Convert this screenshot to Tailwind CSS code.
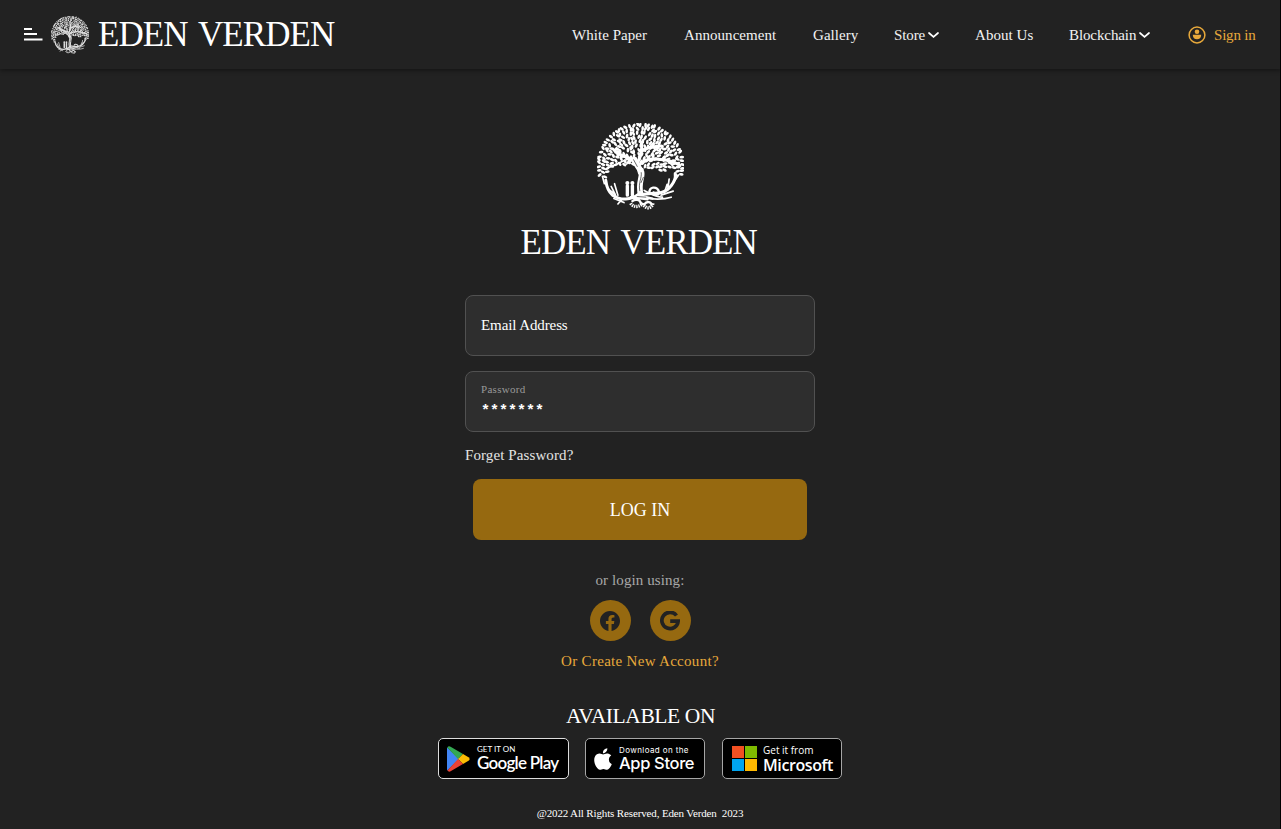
<!DOCTYPE html>
<html lang="en">
<head>
<meta charset="utf-8">
<title>Eden Verden - Sign in</title>
<script src="https://cdn.jsdelivr.net/npm/@tailwindcss/browser@4"></script>
</head>
<body class="bg-[#222222] text-white font-['Liberation_Serif',serif]">
<svg class="hidden">
  <symbol id="tree" viewBox="50 26 258 258">
    <g id="leaves" fill="#fff"></g>
    <g fill="none" stroke="#fff" stroke-linecap="round" stroke-linejoin="round">
      <path stroke-width="9" d="M176 175C172 150 160 138 145 130C130 126 115 120 100 106M172 140C180 125 184 108 182 84M182 110C195 98 215 96 240 94M176 150C190 134 215 130 240 134C262 136 280 140 296 152"/>
      <path stroke-width="5" d="M145 132C125 138 108 150 80 160M118 120L108 98M184 84L192 70M215 98L232 108M205 98L218 84M240 134L262 122M262 138L278 158M150 130L138 148"/>
      <path stroke-width="17" d="M160 134C164 150 178 160 182 172C186 186 170 205 180 240"/>
      <path stroke-width="9" d="M176 236C150 256 120 256 96 240C82 228 78 212 76 196M184 238C210 230 248 244 270 212C280 200 284 190 282 176"/>
      <path stroke-width="5" d="M84 222C94 232 104 234 106 244M92 214L104 238M102 206L112 240M124 252L112 266M160 250C190 240 220 262 270 246M190 226C210 236 220 246 244 246M260 222L264 192M270 212L292 180M250 232L258 208M72 206L66 184M240 240L276 228M100 250L130 262"/>
      <path stroke-width="7" d="M206 234C202 214 228 212 234 230C236 240 222 242 218 232"/>
      <path stroke-width="10" stroke-dasharray="4 2.5" stroke-linecap="butt" d="M150 264C156 276 178 278 186 262M186 264C192 282 212 282 216 264"/>
      <path stroke-width="7" d="M155 258C164 250 178 254 180 264M190 268C198 256 210 260 212 268M150 246L200 252M170 240L215 250"/>
      <path stroke-width="10" d="M140 212V240M155 212V240"/>
    </g>
    <g fill="#fff"><circle cx="140" cy="204" r="6"/><circle cx="155" cy="204" r="6"/></g>
    <path fill="none" stroke="#222" stroke-width="2" d="M181 172C184 188 172 202 177 228M158 134L170 156M188 186L180 204M168 244L196 246"/>
  </symbol>
</svg>

<div class="relative flex h-[829px] w-[1281px] flex-col overflow-hidden">
  <header class="flex h-[69px] shrink-0 items-center pl-6 pr-[25px] shadow-[0_2px_4px_rgba(0,0,0,0.35)]">
    <svg class="h-[13px] w-[19px]" viewBox="0 0 19 13" fill="#fff"><path d="M0 0h8v2H0zM0 5h13v2H0zM0 10.500h18.500v2H0z"/></svg>
    <svg class="ml-2 h-[38px] w-[38px] opacity-85"><use href="#tree"/></svg>
    <div class="ml-[9px] w-[238px] whitespace-nowrap text-[35px] leading-[40px] tracking-[-0.9px] [word-spacing:3px]">EDEN VERDEN</div>
    <nav class="ml-auto flex items-center whitespace-nowrap text-[15px] leading-5 tracking-[0.05px] text-[#f2f2f2]">
      <a class="mr-9 w-[76px]">White Paper</a>
      <a class="mr-9 w-[93px]">Announcement</a>
      <a class="mr-9 w-[45px]">Gallery</a>
      <a class="mr-9 flex w-[45px] items-center justify-between tracking-[-0.1px]">Store<svg class="h-[6px] w-[11px] shrink-0" viewBox="0 0 11 6" fill="none" stroke="#fff" stroke-width="1.7" stroke-linecap="round"><path d="M1 1l4.500 3.800L10 1"/></svg></a>
      <a class="mr-9 w-[58px]">About Us</a>
      <a class="mr-[38px] flex w-[81px] items-center justify-between tracking-[-0.1px]">Blockchain<svg class="h-[6px] w-[11px] shrink-0" viewBox="0 0 11 6" fill="none" stroke="#fff" stroke-width="1.7" stroke-linecap="round"><path d="M1 1l4.500 3.800L10 1"/></svg></a>
      <a class="flex items-center gap-2 text-[#e8a93b]">
        <svg class="h-[18px] w-[18px]" viewBox="0 0 18 18"><circle cx="9" cy="9" r="7.900" fill="none" stroke="#e8a93b" stroke-width="1.500"/><circle cx="9" cy="5.800" r="2.300" fill="#e8a93b"/><path fill="#e8a93b" d="M4.800 8.700h8.400c0 3-1.700 4.600-4.200 4.600S4.800 11.700 4.800 8.700z"/></svg>
        <span class="w-[42px] tracking-[-0.2px]">Sign in</span>
      </a>
    </nav>
  </header>

  <main class="flex w-[1280px] flex-col items-center">
    <svg class="mt-[54px] h-[87px] w-[87px]"><use href="#tree"/></svg>
    <h1 class="mt-[13px] w-[239px] whitespace-nowrap text-[35px] leading-[40px] tracking-[-0.9px] [word-spacing:3px]">EDEN VERDEN</h1>

    <div class="mt-[32px] flex h-[61px] w-[350px] items-center rounded-lg border border-[#515151] bg-[#2e2e2e] px-[15px] text-[15px] tracking-[-0.1px]">Email Address</div>
    <div class="mt-[15px] flex h-[61px] w-[350px] flex-col rounded-lg border border-[#515151] bg-[#2e2e2e] px-[15px] pt-[10px]">
      <span class="text-[11px] leading-[14px] tracking-[0.3px] text-[#999]">Password</span>
      <span class="mt-[6px] flex h-[14px] font-['Liberation_Mono',monospace] text-[15px] font-bold leading-[20px]">*******</span>
    </div>
    <a class="mt-[13px] w-[350px] text-[15px] leading-5 tracking-[0.1px] text-[#e4e4e4]">Forget Password?</a>
    <button class="mt-[14px] h-[61px] w-[334px] rounded-lg bg-[#966910] pt-px text-[18px]">LOG IN</button>
    <p class="mt-[30px] text-[15px] leading-5 tracking-[0.1px] text-[#a8a8a8]">or login using:</p>
    <div class="mt-[10px] flex gap-[19px]">
      <a class="flex h-[41px] w-[41px] items-center justify-center rounded-full bg-[#966910]"><svg class="h-5 w-5" viewBox="0 0 24 24" fill="#222"><path d="M24 12.073c0-6.627-5.373-12-12-12s-12 5.373-12 12c0 5.990 4.388 10.954 10.125 11.854v-8.385H7.078v-3.470h3.047V9.430c0-3.007 1.792-4.669 4.533-4.669 1.312 0 2.686.235 2.686.235v2.953H15.830c-1.491 0-1.956.925-1.956 1.874v2.250h3.328l-.532 3.470h-2.796v8.385C19.612 23.027 24 18.062 24 12.073z"/></svg></a>
      <a class="flex h-[41px] w-[41px] items-center justify-center rounded-full bg-[#966910]"><svg class="h-5 w-5" viewBox="0 0 20 20" fill="none" stroke="#222" stroke-width="3.700"><path d="M16.500 4.500A8.150 8.150 0 1 0 18.150 10.100H10.200"/></svg></a>
    </div>
    <a class="mt-[10px] text-[15px] leading-5 tracking-[0.3px] text-[#e8a93b]">Or Create New Account?</a>

    <h2 class="mt-[33px] whitespace-nowrap pl-px text-[21.500px] leading-6 tracking-[-0.400px]">AVAILABLE ON</h2>
    <div class="mt-[10px] flex whitespace-nowrap">
      <a class="flex h-[41px] w-[131px] items-center rounded-[5px] border border-[#ddd] bg-black pl-[8px] font-['Lato',sans-serif]">
        <svg class="h-[26px] w-[23px] shrink-0" viewBox="0 0 23 26"><path fill="#4285f4" d="M.3 1.500Q0 2 0 3v20q0 1 .4 1.600L12 13z"/><path fill="#34a853" d="M.3 1.500Q1.500-.4 3.600.7L16 8l-5 5z"/><path fill="#fbbc04" d="M16 8l5.500 3.200q2.300 1.800 0 3.600L16 18l-5-5z"/><path fill="#ea4335" d="M.4 24.600Q1.700 26.300 3.600 25.300L16 18l-5-5z"/></svg>
        <span class="ml-[7px] flex flex-col"><span class="text-[8px] leading-[9px]">GET IT ON</span><span class="text-[17px] font-semibold leading-[18px] tracking-[-0.750px]">Google Play</span></span>
      </a>
      <a class="ml-4 flex h-[41px] w-[120px] items-center rounded-[5px] border border-[#a6a6a6] bg-black pl-[8px] font-['Inter',sans-serif]">
        <svg class="h-[22px] w-[18px] shrink-0" viewBox="2 0 20 24" fill="#fff"><path d="M12.152 6.896c-.948 0-2.415-1.078-3.960-1.040-2.040.027-3.910 1.183-4.961 3.014-2.117 3.675-.546 9.103 1.519 12.090 1.013 1.454 2.208 3.090 3.792 3.039 1.520-.065 2.090-.987 3.935-.987 1.831 0 2.350.987 3.960.948 1.637-.026 2.676-1.480 3.676-2.948 1.156-1.688 1.636-3.325 1.662-3.415-.039-.013-3.182-1.221-3.220-4.857-.026-3.040 2.480-4.494 2.597-4.559-1.429-2.090-3.623-2.324-4.390-2.376-2-.156-3.675 1.090-4.610 1.090zM15.530 3.830c.843-1.012 1.400-2.427 1.245-3.830-1.207.052-2.662.805-3.532 1.818-.780.896-1.454 2.338-1.273 3.714 1.338.104 2.715-.688 3.559-1.701"/></svg>
        <span class="ml-[7px] flex flex-col"><span class="text-[8px] leading-[9px] tracking-[0.400px]">Download on the</span><span class="text-[16.500px] font-medium leading-[17px] tracking-[-0.350px]">App Store</span></span>
      </a>
      <a class="ml-[17px] flex h-[41px] w-[120px] items-center rounded-[5px] border border-[#a6a6a6] bg-black pl-[9px] font-['Open_Sans',sans-serif]">
        <svg class="h-[25px] w-[25px] shrink-0" viewBox="0 0 25 25"><path fill="#f25022" d="M0 0h12v12H0z"/><path fill="#7fba00" d="M13 0h12v12H13z"/><path fill="#00a4ef" d="M0 13h12v12H0z"/><path fill="#ffb900" d="M13 13h12v12H13z"/></svg>
        <span class="ml-[6px] flex flex-col"><span class="text-[10px] leading-[12px]">Get it from</span><span class="text-[16px] font-semibold leading-[18px] tracking-[-0.400px]">Microsoft</span></span>
      </a>
    </div>
    <p class="mt-[27px] whitespace-pre text-[11px] leading-[14px] tracking-[-0.140px]">@2022 All Rights Reserved, Eden Verden  2023</p>
  </main>
  <div class="absolute right-0 top-0 h-full w-px bg-black"></div>
</div>
<script>
  // Scatter leaves over the crown, leaving the hollows either side of the trunk open.
  let seed = 7, out = '';
  const rnd = () => (seed = (seed * 16807) % 2147483647) / 2147483647;
  for (let r = 12; r <= 124; r += 12.4) {
    const n = Math.round(2 * Math.PI * r / 11);
    for (let i = 0; i < n; i++) {
      const a = (i + rnd() * 0.6) / n * 2 * Math.PI;
      const x = 179 + Math.cos(a) * (r + rnd() * 4 - 2), y = 154 + Math.sin(a) * (r + rnd() * 4 - 2);
      const floor = Math.abs(x - 179) > 98 ? 190 : x < 179 ? 154 : 166;
      if (y > floor) continue;
      const turn = Math.atan2(y - 170, x - 179) * 57.3 + (rnd() - 0.5) * 80;
      out += `<ellipse cx="${x.toFixed(1)}" cy="${y.toFixed(1)}" rx="7" ry="4" transform="rotate(${turn.toFixed(0)} ${x.toFixed(1)} ${y.toFixed(1)})"/>`;
    }
  }
  document.getElementById('leaves').innerHTML = out;
</script>
</body>
</html>
